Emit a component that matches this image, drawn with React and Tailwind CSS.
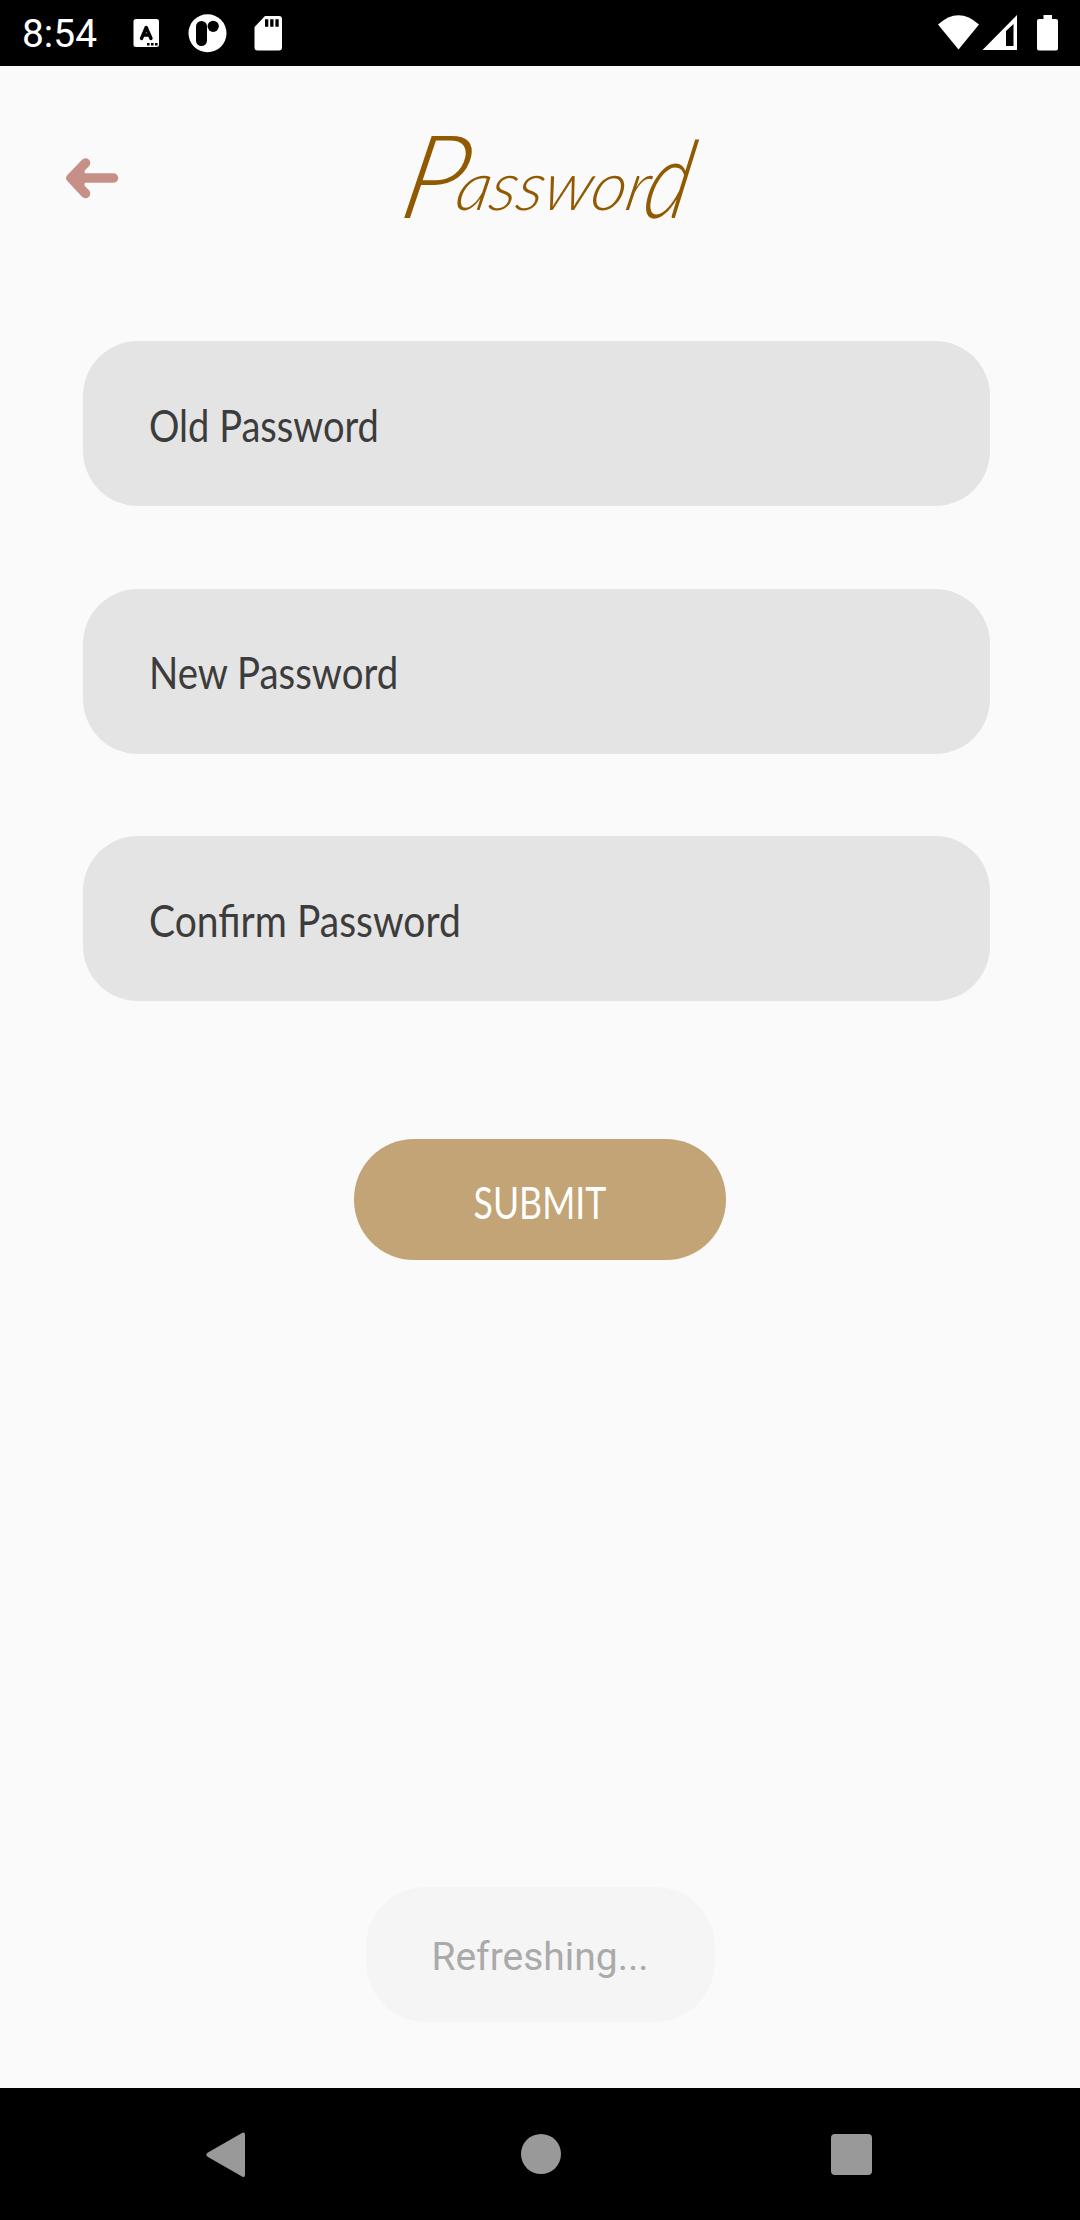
const fields = [
  { label: "Old Password", fit: "scale-x-[.865]" },
  { label: "New Password", fit: "scale-x-[.873]" },
  { label: "Confirm Password", fit: "scale-x-[.887]" },
];

function StatusBar() {
  return (
    <header className="flex h-[66px] items-center justify-between bg-black pl-[22px] pr-[20px] text-white">
      <div className="flex items-center">
        <span className="w-[111px] pt-[2px] font-[Roboto,sans-serif] text-[39.500px] leading-[66px]">
          <span className="inline-block origin-left scale-x-[.985]">8:54</span>
        </span>
        <svg width="160" height="66" viewBox="133 0 160 66" fill="white">
          <rect x="133.5" y="19" width="25.5" height="28" rx="2.5" />
          <path d="M141.5 38.5 146.2 27.5 151 38.5M143 35h6.5" fill="none" stroke="black" strokeWidth="3.4" strokeLinecap="round" strokeLinejoin="round" />
          <path d="M147 43h2.6v2.4H147zM151 43h2.6v2.4H151zM155 43h2.6v2.4H155z" fill="black" />
          <circle cx="207.5" cy="33.3" r="19" />
          <rect x="196" y="21" width="11" height="25" rx="5.5" fill="black" />
          <circle cx="213.2" cy="26.3" r="5.6" fill="black" />
          <path d="M265 16h14q3 0 3 3v28.5q0 3-3 3h-21.500q-3 0-3-3V27z" />
          <path d="M265 19.300h3.300v7.500H265zM270.200 19.300h3.300v7.500h-3.300zM275.400 19.300h3.300v7.500h-3.300z" fill="black" />
        </svg>
      </div>
      <svg width="122" height="66" viewBox="938 0 122 66" fill="white">
        <path d="M938 24.500Q958.500 6 979 24.500L958.500 49.500z" />
        <path fillRule="evenodd" d="M982.500 50 1017 15v35zM1006 31v15h7.500V24z" />
        <path d="M1043.500 15h8.500v4h4q2 0 2 2v27.500q0 2-2 2h-17q-2 0-2-2V21q0-2 2-2h4.500z" />
      </svg>
    </header>
  );
}

function NavBar() {
  return (
    <nav className="flex h-[132px] items-center justify-between bg-black pl-[205px] pr-[208px] text-[#999999]">
      <svg width="41" height="48" viewBox="205 2130 41 48" fill="currentColor">
        <path d="M208 2152.500 242 2133q3-1.500 3 2v40q0 3-3 1.500L208 2157q-3.500-2.200 0-4.500z" />
      </svg>
      <div className="ml-[67px] size-[40px] rounded-full bg-current" />
      <div className="mt-px ml-[63px] size-[41px] rounded-[4px] bg-current" />
    </nav>
  );
}

export default function App() {
  return (
    <div className="flex h-[2220px] w-[1080px] flex-col overflow-hidden bg-[#fafafa]">
      <StatusBar />
      <main className="flex flex-1 flex-col items-center">
        <div className="grid h-[275px] w-full grid-cols-[1fr_auto_1fr] items-start">
          <button aria-label="Back" className="ml-[64px] mt-[88px] w-[56px]">
            <svg width="56" height="48" viewBox="64 154 56 48" fill="none" stroke="#c69088" strokeWidth="9.500" strokeLinecap="round" strokeLinejoin="round">
              <path d="M85.500 163 71 178 85.500 193.500" />
              <path d="M73 178h40.500" />
              <path d="M74 178 80 172.500v11z" fill="#c69088" />
            </svg>
          </button>
          <h1 className="mt-[50px] ml-[18px] flex h-[100px] w-[290px] items-baseline justify-center font-[Lato,sans-serif] font-light leading-[100px] text-[#915a00] italic">
            <span className="inline-block -skew-x-12 whitespace-nowrap">
              <span className="inline-block translate-y-[8px] text-[116px] leading-[100px]">P</span>
              <span className="text-[68px]">
                <span className="-ml-[8px] inline-block w-[188px] origin-left">asswor</span>
              </span>
              <span className="-mr-[8px] inline-block origin-left translate-y-[8px] scale-x-[.8] text-[108px] leading-[100px]">d</span>
            </span>
          </h1>
        </div>
        <form className="flex w-full flex-col items-center">
          <div className="flex w-full flex-col gap-[82.500px] pl-[83px] pr-[90px]">
            {fields.map(({ label, fit }) => (
              <label key={label} className="flex h-[165px] items-center rounded-[55px] bg-[#e4e4e4] pl-[66px] pt-[2px] font-[Lato,sans-serif] text-[44px] text-[#3c3c3c]">
                <span className={`inline-block origin-left whitespace-nowrap ${fit}`}>{label}</span>
              </label>
            ))}
          </div>
          <button type="button" className="mt-[138px] flex h-[121px] w-[372px] items-center justify-center rounded-[60px] bg-[#c3a476] pt-[4px] font-[Lato,sans-serif] text-[44px] text-white">
            <span className="inline-block scale-x-[.81]">SUBMIT</span>
          </button>
        </form>
        <div className="mt-auto mb-[66px] flex h-[135px] w-[349px] items-center justify-center rounded-[60px] bg-[#f5f5f5] pt-[5px] font-[Roboto,sans-serif] text-[39px] text-[#aaaaaa]">
          Refreshing...
        </div>
      </main>
      <NavBar />
    </div>
  );
}
